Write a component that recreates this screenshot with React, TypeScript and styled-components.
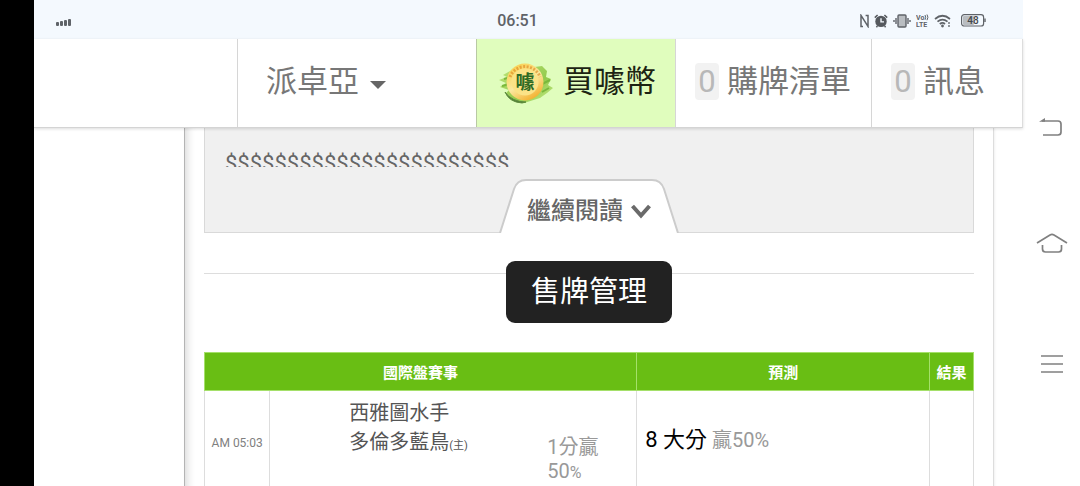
import React from 'react';
import styled, { createGlobalStyle } from 'styled-components';

const GlobalStyle = createGlobalStyle`
  * { box-sizing: border-box; }
  body {
    margin: 0;
    background: #fff;
    color: #666;
    font-family: Roboto, "Noto Sans CJK TC", sans-serif;
  }
  button { font: inherit; border: 0; padding: 0; background: none; cursor: pointer; }
  a { color: inherit; text-decoration: none; }
`;

const Device = styled.div`
  display: flex;
  height: 100vh;
  overflow: hidden;
`;

const Notch = styled.div`
  flex: 0 0 34px;
  background: #000;
`;

const Screen = styled.div`
  flex: 1;
  min-width: 0;
  display: flex;
  flex-direction: column;
`;

const StatusBar = styled.div`
  flex: none;
  display: grid;
  grid-template-columns: 1fr auto 1fr;
  align-items: center;
  height: 39px;
  padding: 2px 37px 0 21px;
  background: #f4f9fe;
  color: #5f6368;
`;

const Clock = styled.time`
  padding-right: 6px;
  font-size: 16px;
  line-height: 20px;
  font-weight: 500;
`;

const StatusIcons = styled.div`
  display: flex;
  justify-content: flex-end;
  align-items: center;
  gap: 5px;

  svg:last-child { margin-left: 5px; }
`;

const TopNav = styled.nav`
  flex: none;
  position: relative;
  z-index: 2;
  display: grid;
  grid-template-columns: 203fr 239fr 199fr 196fr 151fr;
  height: 89px;
  background: #fff;
  border-bottom: 1px solid #d4d4d4;
  border-right: 1px solid #ddd;
  box-shadow: 0 1px 3px rgba(0, 0, 0, 0.14);
`;

const NavItem = styled.a<{ $active?: boolean; $inset: number }>`
  display: flex;
  align-items: center;
  padding: 0 0 3px ${p => p.$inset}px;
  border-left: 1px solid ${p => (p.$active ? '#b9c9a4' : '#d6d6d6')};
  background: ${p => (p.$active ? '#e0fdbd' : 'transparent')};
  color: ${p => (p.$active ? '#1c2412' : '#777')};
  font-size: 31px;
  line-height: 37px;
  white-space: nowrap;
`;

const Caret = styled.span`
  margin: 6px 0 0 11px;
  border: 8px solid transparent;
  border-top-color: #666;
  border-bottom: 0;
`;

const Count = styled.span`
  width: 24px;
  margin-right: 8px;
  border-radius: 4px;
  background: #f2f2f2;
  color: #b8b8b8;
  text-align: center;
`;

const Coin = styled.svg`
  width: 56px;
  height: 44px;
  margin-right: 9px;
`;

const Content = styled.main`
  flex: 1;
  margin: 0 29px 0 150px;
  padding: 0 19px;
  border-left: 1px solid #b4b4b4;
  border-right: 1px solid #ddd;
  box-shadow: inset 8px 0 8px -6px rgba(0, 0, 0, 0.16), 1px 0 2px rgba(0, 0, 0, 0.06);
`;

const Excerpt = styled.section`
  display: flex;
  flex-direction: column;
  align-items: center;
  background: #f0f0f0;
  border: 1px solid #d9d9d9;
  border-top: 0;
`;

const ExcerptText = styled.p`
  align-self: stretch;
  height: 16px;
  margin: 23px 20px 12px;
  overflow: hidden;
  font-size: 22px;
  line-height: 26px;
`;

const ReadMore = styled.button`
  position: relative;
  width: 180px;
  height: 54px;
  margin-bottom: -1px;
  color: #666;
`;

const TabShape = styled.svg`
  position: absolute;
  inset: 0;
  width: 100%;
  height: 100%;
`;

const ReadMoreLabel = styled.span`
  position: relative;
  display: flex;
  align-items: center;
  justify-content: center;
  gap: 8px;
  padding-top: 10px;
  font-size: 24px;
  line-height: 30px;
  font-weight: 500;
`;

const ManageRow = styled.section`
  display: flex;
  justify-content: center;
  margin: 40px 0 29px;
  border-top: 1px solid #ddd;
`;

const ManageButton = styled.button`
  height: 62px;
  margin-top: -13px;
  padding: 0 25px 6px;
  border-radius: 9px;
  background: #222;
  color: #fff;
  font-size: 29px;
`;

const Matches = styled.table`
  width: 100%;
  border-collapse: collapse;
  table-layout: fixed;
`;

const Head = styled.th`
  height: 38px;
  padding: 3px 0 0;
  border: 1px solid #a5e06a;
  background: #69be14;
  color: #fff;
  font-size: 15px;
  line-height: 20px;
  font-weight: 700;
`;

const Cell = styled.td`
  height: 105px;
  padding: 0;
  border: 1px solid #ddd;
  vertical-align: middle;
`;

const TimeText = styled.div`
  font-size: 12px;
  line-height: 16px;
  color: #808080;
  text-align: center;
`;

const Fixture = styled.div`
  display: flex;
  align-items: flex-start;
  height: 89px;
  padding-left: 79px;
`;

const Teams = styled.div`
  flex: 0 0 198px;
  font-size: 20px;
  line-height: 29px;
  color: #555;

  small { font-size: 11px; }
`;

const Handicap = styled.div`
  padding-top: 36px;
  font-size: 20px;
  line-height: 24px;
  color: #999;

  small { font-size: 16px; }
`;

const Pick = styled.div`
  padding: 0 0 6px 8px;
  font-size: 20px;
  line-height: 28px;
  color: #999;

  strong { font-size: 22px; font-weight: 400; color: #000; }
`;

const Rail = styled.nav`
  flex: 0 0 57px;
  display: flex;
  flex-direction: column;
  align-items: center;
  padding-top: 108px;
  gap: 78px;
`;

const RailButton = styled.button`
  width: 40px;
  height: 40px;

  svg { display: block; margin: auto; }
`;

const SignalIcon = () => (
  <svg width="18" height="12" fill="#5f6368" aria-label="訊號">
    <rect x="1" y="7" width="3" height="4" rx="1" />
    <rect x="5" y="6" width="3" height="5" rx="1" />
    <rect x="9" y="5" width="3" height="6" rx="1" />
    <rect x="13" y="4" width="3" height="7" rx="1" />
  </svg>
);

const NfcIcon = () => (
  <svg width="9" height="14" fill="none" stroke="#5f6368" strokeWidth="1.5">
    <path d="M3 12.4 H1 V1.4 L8 12.4 V1.4 H5.6" />
  </svg>
);

const AlarmIcon = () => (
  <svg width="14" height="14" viewBox="0 0 14 14">
    <path d="M0.8 3.6 L3.6 1 M13.2 3.6 L10.4 1 M3.4 12 L2.4 13.2 M10.6 12 L11.6 13.2" stroke="#55595e" strokeWidth="1.5" />
    <circle cx="7" cy="7.4" r="5.7" fill="#55595e" />
    <path d="M7 4.3 V7.9 H10" fill="none" stroke="#f4f9fe" strokeWidth="1.4" />
  </svg>
);

const VibrateIcon = () => (
  <svg width="18" height="14" viewBox="0 0 18 14" fill="none" stroke="#5f6368" strokeWidth="1.4">
    <rect x="5" y="1" width="8" height="12" rx="1" fill="#b9bdc1" />
    <path d="M3 4 V10 M1 6 V8 M15 4 V10 M17 6 V8" />
  </svg>
);

const VolteIcon = () => (
  <svg width="13" height="14" viewBox="0 0 13 14" fill="#5f6368" fontFamily="Roboto, sans-serif" fontWeight="700">
    <text x="0" y="6" fontSize="7">Vo</text>
    <path d="M9 1 Q10.4 3.3 9 5.8 M11 0.5 Q12.8 3.3 11 6.2" fill="none" stroke="#5f6368" />
    <text x="0" y="13" fontSize="7">LTE</text>
  </svg>
);

const WifiIcon = () => (
  <svg width="17" height="14" viewBox="0 0 17 14" fill="none" stroke="#5f6368" strokeWidth="1.7">
    <path d="M1 5 Q8.5 -1.5 16 5" />
    <path d="M3.5 7.7 Q8.5 3.4 13.5 7.7" />
    <path d="M5.8 10 Q8.5 7.8 11 10" />
    <circle cx="8.5" cy="12" r="1.4" fill="#5f6368" stroke="none" />
    <path d="M15 8 V10 M15 11 V13" strokeWidth="1.3" />
  </svg>
);

const BatteryIcon = () => (
  <svg width="25" height="13" viewBox="0 0 25 13">
    <rect x="2" y="2" width="11" height="9" rx="1" fill="#b9bdc1" />
    <rect x="0.6" y="0.6" width="22" height="11.4" rx="2.6" fill="none" stroke="#5f6368" strokeWidth="1.2" />
    <path d="M24 4.5 V8" stroke="#5f6368" strokeWidth="1.4" />
    <text x="12" y="10" fontSize="10" fontWeight="500" textAnchor="middle" fill="#44474b" fontFamily="Roboto, sans-serif">48</text>
  </svg>
);

const CoinLogo = () => (
  <Coin viewBox="0 0 56 44" aria-hidden="true">
    <defs>
      <linearGradient id="gold" x1="0.2" y1="0" x2="0.8" y2="1">
        <stop offset="0" stopColor="#f9cf4a" />
        <stop offset="0.5" stopColor="#fbe9a0" />
        <stop offset="1" stopColor="#f2a91f" />
      </linearGradient>
      <linearGradient id="brush" x1="0" y1="0" x2="1" y2="1">
        <stop offset="0" stopColor="#bfe67c" />
        <stop offset="0.6" stopColor="#93ca4c" />
        <stop offset="1" stopColor="#c9ee8c" />
      </linearGradient>
    </defs>
    <path d="M5 15 L14 10 L44 6 L49 11 L48 17 L53 19 L50 25 L55 28 L49 33 L42 38 L26 43 L14 39 L8 33 L11 30 L2 27 L8 23 L1 20 L9 17 Z" fill="url(#brush)" />
    <path d="M6 19 L13 17 M4 26 L12 24 M44 32 L51 28 M44 24 L52 20" stroke="#7ab83c" strokeWidth="2" fill="none" />
    <path d="M7 32 Q14 42 28 42 L24 43 Q11 42 7 32 Z" fill="#4f7f36" stroke="#5d8a3c" strokeWidth="1" />
    <circle cx="27" cy="22" r="18.5" fill="url(#gold)" />
    <path d="M12 17 A16 16 0 0 1 42 17" fill="none" stroke="#e0902a" strokeWidth="3" strokeDasharray="2 1.5" opacity="0.7" />
    <circle cx="27" cy="22" r="13.5" fill="#fbe387" />
    <text x="27" y="29" textAnchor="middle" fontSize="19" fontWeight="700" fill="#2f6b24" fontFamily="Noto Sans CJK TC, sans-serif">噱</text>
  </Coin>
);

export default function App() {
  return (
    <Device>
      <GlobalStyle />
      <Notch />
      <Screen>
        <StatusBar>
          <SignalIcon />
          <Clock>06:51</Clock>
          <StatusIcons>
            <NfcIcon />
            <AlarmIcon />
            <VibrateIcon />
            <VolteIcon />
            <WifiIcon />
            <BatteryIcon />
          </StatusIcons>
        </StatusBar>

        <TopNav>
          <span />
          <NavItem href="#account" $inset={28}>派卓亞<Caret /></NavItem>
          <NavItem href="#coins" $active $inset={21}><CoinLogo />買噱幣</NavItem>
          <NavItem href="#cart" $inset={19}><Count>0</Count>購牌清單</NavItem>
          <NavItem href="#messages" $inset={19}><Count>0</Count>訊息</NavItem>
        </TopNav>

        <Content>
          <Excerpt>
            <ExcerptText>{'$'.repeat(23)}</ExcerptText>
            <ReadMore type="button">
              <TabShape viewBox="0 0 180 54">
                <path d="M1 54 L15 10 Q18 1 27 1 H153 Q162 1 165 10 L179 54" fill="#fff" stroke="#ccc" strokeWidth="2" />
              </TabShape>
              <ReadMoreLabel>
                繼續閱讀
                <svg width="20" height="15" viewBox="0 0 20 15" fill="none" stroke="#6a6a6a" strokeWidth="4">
                  <path d="M1.5 2 L10 11.5 L18.5 2" />
                </svg>
              </ReadMoreLabel>
            </ReadMore>
          </Excerpt>

          <ManageRow>
            <ManageButton type="button">售牌管理</ManageButton>
          </ManageRow>

          <Matches>
            <colgroup>
              <col style={{ width: '8.5%' }} />
              <col style={{ width: '47.7%' }} />
              <col />
              <col style={{ width: '5.7%' }} />
            </colgroup>
            <thead>
              <tr>
                <Head colSpan={2}>國際盤賽事</Head>
                <Head>預測</Head>
                <Head>結果</Head>
              </tr>
            </thead>
            <tbody>
              <tr>
                <Cell><TimeText>AM 05:03</TimeText></Cell>
                <Cell>
                  <Fixture>
                    <Teams>
                      <div>西雅圖水手</div>
                      <div>多倫多藍鳥<small>(主)</small></div>
                    </Teams>
                    <Handicap>
                      <div>1分贏</div>
                      <div>50<small>%</small></div>
                    </Handicap>
                  </Fixture>
                </Cell>
                <Cell><Pick><strong>8 大分</strong> 贏50%</Pick></Cell>
                <Cell />
              </tr>
            </tbody>
          </Matches>
        </Content>
      </Screen>

      <Rail>
        <RailButton type="button" aria-label="返回">
          <svg width="26" height="22" viewBox="0 0 26 22" fill="none" stroke="#808080" strokeWidth="1.7">
            <path d="M3 4 H19 Q22 4 22 7 V15 Q22 18 19 18 H4" />
            <path d="M0 4.8 L6 1 V4.8 Z" fill="#808080" stroke="none" />
          </svg>
        </RailButton>
        <RailButton type="button" aria-label="首頁">
          <svg width="32" height="26" viewBox="0 0 32 26" fill="none" stroke="#808080" strokeWidth="1.7">
            <path d="M1 10 L14 2 Q16 0.8 18 2 L31 10" />
            <path d="M6.5 12 V16 Q6.5 19 9.5 19 H22.5 Q25.5 19 25.5 16 V12" />
          </svg>
        </RailButton>
        <RailButton type="button" aria-label="選單">
          <svg width="24" height="20" viewBox="0 0 24 20" stroke="#808080" strokeWidth="1.7">
            <path d="M1 2 H23 M1 10 H23 M1 18 H23" />
          </svg>
        </RailButton>
      </Rail>
    </Device>
  );
}
